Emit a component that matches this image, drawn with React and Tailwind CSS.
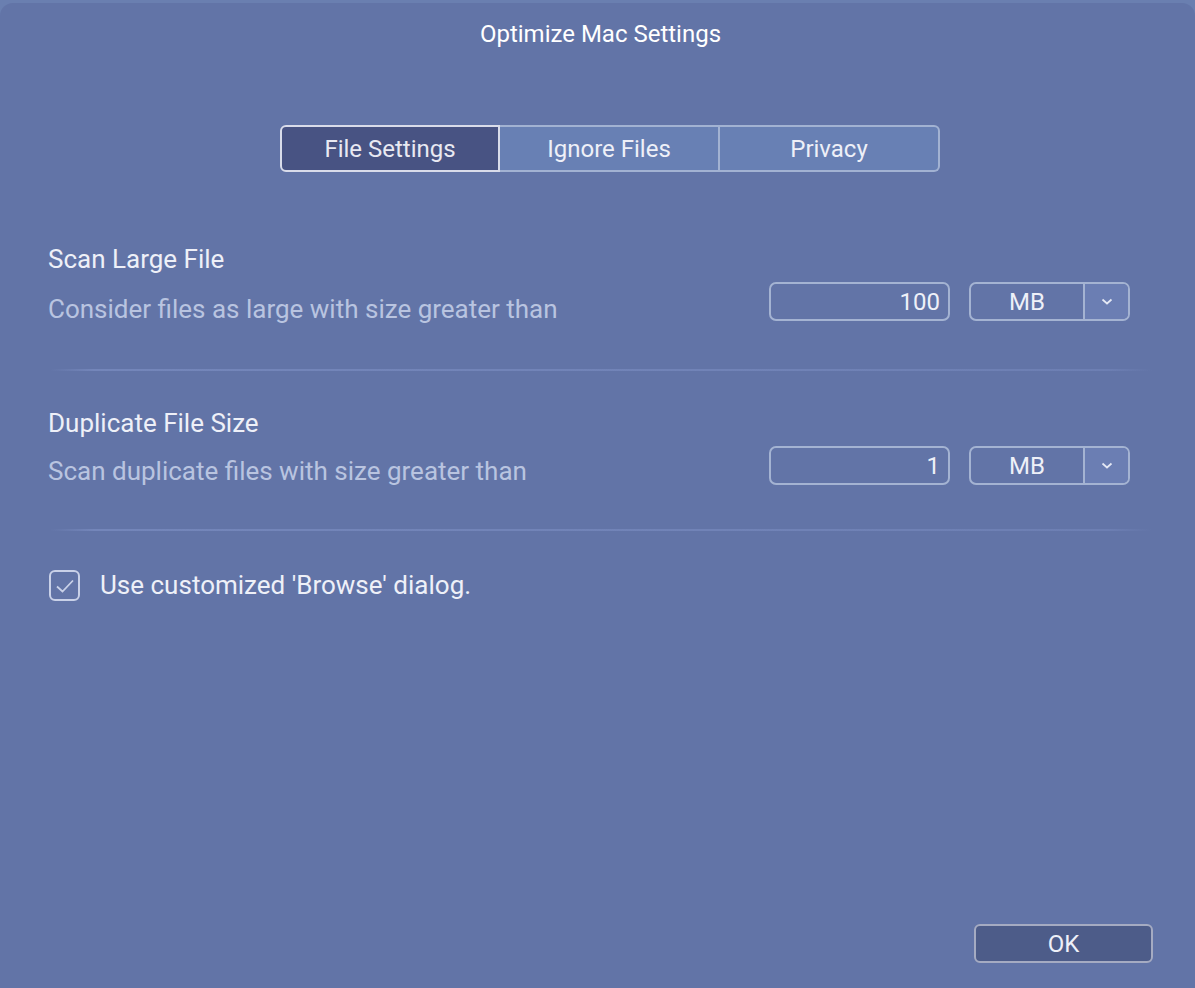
const tabs = ['File Settings', 'Ignore Files', 'Privacy'];

function SizeRow({ title, desc, value, gap }) {
    return (
        <div className="flex justify-between">
            <div className="flex flex-col">
                <div className="text-[26px] leading-[30px] text-[#eef0f8]">{title}</div>
                <div className={`${gap} text-[26px] leading-[30px] text-[#b9c4e0]`}>{desc}</div>
            </div>
            <div className="flex gap-[19px] mt-[38px] h-[39px]">
                <div className="w-[181px] h-full border-2 border-[#a4b3d2] rounded-[7px] flex items-center justify-end pr-[8px] text-[24px] text-[#eef0f8]">
                    {value}
                </div>
                <div className="w-[161px] h-full border-2 border-[#a4b3d2] rounded-[7px] flex overflow-hidden">
                    <div className="flex-1 flex items-center justify-center text-[24px] text-[#eef0f8]">MB</div>
                    <div className="w-[45px] h-full border-l-2 border-[#a4b3d2] bg-[#6b7eb3] flex items-center justify-center">
                        <svg width="12" height="7" viewBox="0 0 12 7" fill="none">
                            <path d="M1.5 1.5 L6 5.5 L10.5 1.5" stroke="#e4e8f4" strokeWidth="1.7" />
                        </svg>
                    </div>
                </div>
            </div>
        </div>
    );
}

function Divider() {
    return <div className="h-[2px] bg-[linear-gradient(90deg,transparent,#7486ba_4%,#7183b7_60%,#6d7fb3_96%,transparent)]" />;
}

export default function App() {
    return (
        <div className="w-[1195px] h-[988px] bg-[#6a7fb0] pt-[3px] flex flex-col" style={{ fontFamily: 'Roboto, "Noto Sans", sans-serif' }}>
            <div className="flex-1 bg-[#6274a7] rounded-t-[13px] flex flex-col">
                <div className="h-[62px] flex items-center justify-center pl-[6px] text-[24px] text-white">Optimize Mac Settings</div>

                <div className="mt-[60px] flex justify-center pl-[25px]">
                    {tabs.map((t, i) => (
                        <div
                            key={t}
                            className={
                                i === 0
                                    ? 'w-[220px] h-[47px] flex items-center justify-center text-[24px] text-[#e8e9f2] bg-[#485383] border-2 border-[#d9dcea] rounded-l-[6px]'
                                    : i === 1
                                    ? 'w-[220px] h-[47px] flex items-center justify-center text-[24px] text-[#eef0f8] bg-[#6880b4] border-2 border-l-0 border-[#a2b2d2]'
                                    : 'w-[220px] h-[47px] flex items-center justify-center text-[24px] text-[#eef0f8] bg-[#6880b4] border-2 border-l-0 border-[#a2b2d2] rounded-r-[6px]'
                            }
                        >
                            {t}
                        </div>
                    ))}
                </div>

                <div className="pl-[48px] pr-[65px] mt-[72px]">
                    <SizeRow title="Scan Large File" desc="Consider files as large with size greater than" value="100" gap="mt-[20px]" />
                </div>
                <div className="mt-[45px] pl-[50px] pr-[43px]">
                    <Divider />
                </div>
                <div className="pl-[48px] pr-[65px] mt-[37px]">
                    <SizeRow title="Duplicate File Size" desc="Scan duplicate files with size greater than" value="1" gap="mt-[18px]" />
                </div>
                <div className="mt-[43px] pl-[50px] pr-[43px]">
                    <Divider />
                </div>

                <div className="mt-[35px] pl-[49px] flex items-center gap-[20px]">
                    <div className="w-[31px] h-[31px] border-2 border-[#c9d1e8] rounded-[6px] flex items-center justify-center">
                        <svg width="22" height="18" viewBox="0 0 22 18" fill="none">
                            <path d="M3 9.5 L8.5 14.5 L19 3.5" stroke="#c9d1e8" strokeWidth="1.8" />
                        </svg>
                    </div>
                    <span className="text-[26px] text-[#eef0f8]">Use customized 'Browse' dialog.</span>
                </div>

                <div className="flex-1" />
                <div className="flex justify-end pr-[42px] pb-[25px]">
                    <div className="w-[179px] h-[39px] bg-[#4d5c89] border-2 border-[#a5abc2] rounded-[6px] flex items-center justify-center text-[24px] text-[#eef0f8]">
                        OK
                    </div>
                </div>
            </div>
        </div>
    );
}
